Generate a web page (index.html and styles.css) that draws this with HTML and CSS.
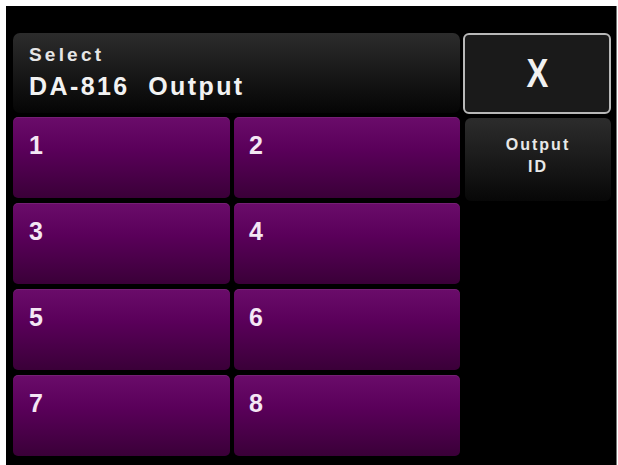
FILE: index.html
```html
<!DOCTYPE html>
<html lang="en">
<head>
<meta charset="UTF-8">
<title>Select DA-816 Output</title>
<link rel="stylesheet" href="styles.css">
</head>
<body>
<div class="screen">
  <div class="main">
    <div class="title-bar">
      <div class="title-small">Select</div>
      <div class="title-big">DA-816&nbsp; Output</div>
    </div>
    <div class="outputs">
      <div class="out-btn">1</div>
      <div class="out-btn">2</div>
      <div class="out-btn">3</div>
      <div class="out-btn">4</div>
      <div class="out-btn">5</div>
      <div class="out-btn">6</div>
      <div class="out-btn">7</div>
      <div class="out-btn">8</div>
    </div>
  </div>
  <div class="side">
    <div class="close-btn"><span class="close-x">X</span></div>
    <div class="id-btn">Output<br>ID</div>
  </div>
</div>
</body>
</html>
```

FILE: styles.css
```css
body{margin:0;background:#fff;font-family:'Liberation Sans',Arial,sans-serif;}
.screen{box-sizing:border-box;margin:6px 0 0 6px;width:611px;height:459px;background:#000;padding:27px 0 0 7px;display:flex;gap:3px;border-right:1px solid #777;}
.main{width:447px;display:flex;flex-direction:column;}
.title-bar{height:80px;box-sizing:border-box;border-radius:7px;background:linear-gradient(#2c2c2c,#1a1a1a 45%,#050505);padding:11px 0 0 16px;color:#f2f2f2;}
.title-small{font-size:19px;font-weight:bold;letter-spacing:3.2px;line-height:22px;color:#e6e6e6;}
.title-big{font-size:25px;font-weight:bold;letter-spacing:2.4px;line-height:30px;margin-top:5px;}
.outputs{margin-top:4px;display:grid;grid-template-columns:217px 226px;grid-auto-rows:81px;gap:5px 4px;}
.out-btn{box-sizing:border-box;border-radius:5px;background:linear-gradient(#6a0c6a,#5a005a 40%,#3a0038);color:#f4e6f4;font-size:25px;font-weight:bold;line-height:24px;padding:16px 0 0 16px;box-shadow:inset 0 1px 0 rgba(255,255,255,.08);cursor:pointer;}
.out-btn:nth-child(even){padding-left:15px;}
.side{width:148px;display:flex;flex-direction:column;}
.close-btn{height:81px;box-sizing:border-box;border:2px solid #b8b8b8;border-radius:6px;background:#1a1a1a;color:#f0f0f0;display:flex;align-items:center;justify-content:center;cursor:pointer;}
.close-x{font-size:40px;font-weight:bold;display:inline-block;transform:scaleX(.82);}
.id-btn{box-sizing:border-box;margin:4px 0 0 2px;height:83px;width:146px;border-radius:6px;background:linear-gradient(#2c2c2c,#1c1c1c 45%,#070707);color:#e8e8e8;font-size:16px;font-weight:bold;letter-spacing:2px;line-height:22px;text-align:center;padding-top:16px;cursor:pointer;}
```
